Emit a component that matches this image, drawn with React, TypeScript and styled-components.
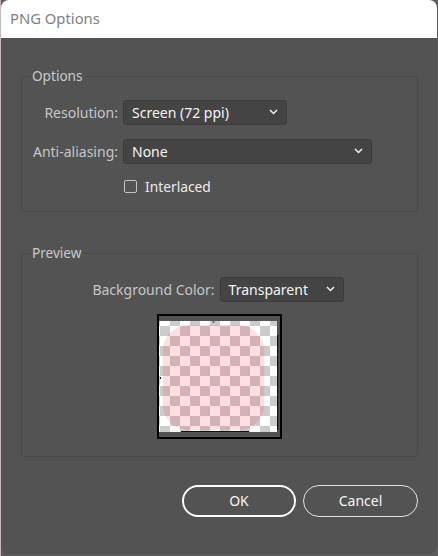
import React from "react";
import styled, { createGlobalStyle } from "styled-components";

const GlobalStyle = createGlobalStyle`
  html, body {
    margin: 0;
    padding: 0;
    background: linear-gradient(to right, #c7b7b7 0, #c7b7b7 1px, #5c5c5c 1px);
    font-family: "Noto Sans", "Open Sans", Arial, sans-serif;
    -webkit-font-smoothing: antialiased;
  }
`;

const Window = styled.div`
  width: 436px;
  height: 554px;
  margin-left: 1px;
  display: flex;
  flex-direction: column;
  background: #535353;
  border-radius: 8px;
  overflow: hidden;
`;

const TitleBar = styled.div`
  height: 38px;
  flex: none;
  display: flex;
  align-items: center;
  padding-left: 9px;
  padding-bottom: 2px;
  box-sizing: border-box;
  background: #ffffff;
  color: #7d8189;
  font-size: 14.8px;
`;

const Content = styled.div`
  flex: 1;
  display: flex;
  flex-direction: column;
  padding: 30px 19px 0 20px;
`;

const Group = styled.fieldset<{ $gap?: number }>`
  margin: ${p => p.$gap ?? 0}px 0 0;
  padding: 16px 0 17px;
  border: 1px solid #4a4a4a;
  border-radius: 3px;
  min-width: 0;
`;

const Legend = styled.legend`
  margin-left: 8px;
  padding: 0 3px 0 2px;
  height: 16px;
  line-height: 16px;
  color: #c9c9c9;
  font-size: 13.6px;
`;

const FormGrid = styled.div`
  display: grid;
  grid-template-columns: 96px 1fr;
  column-gap: 5px;
  row-gap: 14px;
  align-items: center;
`;

const Label = styled.span`
  text-align: right;
  color: #c6c6c6;
  font-size: 14px;
  white-space: nowrap;
`;

const Select = styled.div<{ $width: number }>`
  width: ${p => p.$width}px;
  height: 25px;
  box-sizing: border-box;
  display: flex;
  align-items: center;
  justify-content: space-between;
  padding: 0 8px 1px 8px;
  background: #444444;
  border: 1px solid #3c3c3c;
  border-radius: 3px;
  color: #f4f4f4;
  font-size: 14px;
`;

const CheckRow = styled.label`
  grid-column: 2;
  display: flex;
  align-items: center;
  gap: 8px;
  height: 16px;
  padding-left: 1px;
  color: #ececec;
  font-size: 13.8px;
`;

const CheckBox = styled.span`
  width: 13px;
  height: 13px;
  box-sizing: border-box;
  border: 1px solid #c4c4c4;
  border-radius: 2px;
`;

const CenterRow = styled.div`
  display: flex;
  justify-content: center;
  align-items: center;
  gap: 5px;
  padding-right: 3px;
`;

const PreviewFrame = styled.div`
  margin: 12px auto 0;
  width: 125px;
  height: 125px;
  box-sizing: border-box;
  border: 2px solid #000000;
  background: #535353;
  svg {
    display: block;
  }
`;

const ButtonBar = styled.div`
  display: flex;
  justify-content: flex-end;
  gap: 7px;
  margin-top: 28px;
`;

const Button = styled.button<{ $primary?: boolean }>`
  width: ${p => (p.$primary ? 114 : 115)}px;
  height: 32px;
  border-radius: 16px;
  background: transparent;
  border: ${p => (p.$primary ? "2px solid #ffffff" : "1.5px solid #e2e2e2")};
  color: #f6f6f6;
  font-family: inherit;
  font-size: 14px;
  padding: 0 0 1px;
`;

const Chevron = () => (
  <svg width="9" height="6" viewBox="0 0 9 6">
    <polyline points="1,1 4.5,4.5 8,1" fill="none" stroke="#f0f0f0" strokeWidth="1.5" />
  </svg>
);

const Dropdown = ({ value, width }: { value: string; width: number }) => (
  <Select $width={width}>
    <span>{value}</span>
    <Chevron />
  </Select>
);

const PreviewImage = () => (
  <svg width="121" height="121" viewBox="0 0 121 121">
    <defs>
      <pattern id="checker" x="1" y="0" width="20" height="20" patternUnits="userSpaceOnUse">
        <rect width="20" height="20" fill="#ffffff" />
        <rect x="10" y="0" width="10" height="10" fill="#cccccc" />
        <rect x="0" y="10" width="10" height="10" fill="#cccccc" />
      </pattern>
    </defs>
    <rect x="0" y="5" width="118" height="111" fill="url(#checker)" />
    <rect x="3.7" y="9" width="101.6" height="105" rx="26" fill="rgba(255, 30, 60, 0.14)" />
    <rect x="53.5" y="5.5" width="2" height="1" fill="#111" />
    <rect x="1" y="61" width="1" height="2" fill="#111" />
    <rect x="22" y="115" width="68" height="1" fill="#111" />
    <rect x="118" y="19" width="1.3" height="95" fill="#111" />
  </svg>
);

export default function App() {
  return (
    <>
      <GlobalStyle />
      <Window>
        <TitleBar>PNG Options</TitleBar>
        <Content>
          <Group>
            <Legend>Options</Legend>
            <FormGrid>
              <Label>Resolution:</Label>
              <Dropdown value="Screen (72 ppi)" width={164} />
              <Label>Anti-aliasing:</Label>
              <Dropdown value="None" width={249} />
              <CheckRow>
                <CheckBox />
                Interlaced
              </CheckRow>
            </FormGrid>
          </Group>
          <Group $gap={33}>
            <Legend>Preview</Legend>
            <CenterRow>
              <Label>Background Color:</Label>
              <Dropdown value="Transparent" width={124} />
            </CenterRow>
            <PreviewFrame>
              <PreviewImage />
            </PreviewFrame>
          </Group>
          <ButtonBar>
            <Button $primary>OK</Button>
            <Button>Cancel</Button>
          </ButtonBar>
        </Content>
      </Window>
    </>
  );
}
